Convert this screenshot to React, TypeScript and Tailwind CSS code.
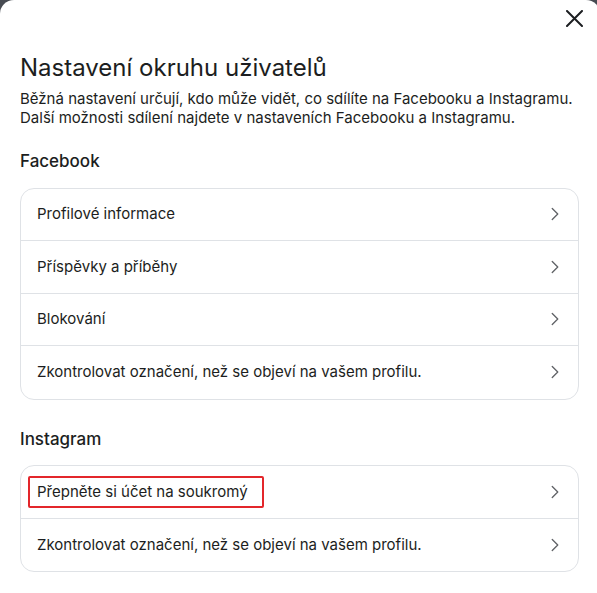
import { ChevronRight } from 'lucide-react'

const facebookRows = [
  'Profilové informace',
  'Příspěvky a příběhy',
  'Blokování',
  'Zkontrolovat označení, než se objeví na vašem profilu.',
]

const instagramRows = [
  'Přepněte si účet na soukromý',
  'Zkontrolovat označení, než se objeví na vašem profilu.',
]

function Row({ label, last, highlight }: { label: string; last?: boolean; highlight?: boolean }) {
  return (
    <div
      className={`flex h-[52.5px] items-center justify-between pl-[16px] pr-[12px] ${
        last ? '' : 'border-b border-[#dfe2e6]'
      }`}
    >
      <span
        className={`text-[15px] text-[#1c1e21] ${
          highlight ? '-ml-[9px] rounded-[2px] border-2 border-[#e3262b] py-[3px] pl-[7px] pr-[14px]' : ''
        }`}
      >
        {label}
      </span>
      <ChevronRight className="h-[22px] w-[22px] text-[#65676b]" strokeWidth={1.5} />
    </div>
  )
}

function Section({ title, rows, highlightIndex }: { title: string; rows: string[]; highlightIndex?: number }) {
  return (
    <div>
      <h2 className="mb-[13px] text-[17px] font-medium text-[#1c1e21]">{title}</h2>
      <div className="overflow-hidden rounded-[14px] border border-[#dfe2e6]">
        {rows.map((r, i) => (
          <Row key={i} label={r} last={i === rows.length - 1} highlight={i === highlightIndex} />
        ))}
      </div>
    </div>
  )
}

export default function App() {
  return (
    <div className="h-[593px] w-[597px] bg-[#474b52]" style={{ fontFamily: 'Inter, "Noto Sans", sans-serif' }}>
      <div className="h-full w-[600px] rounded-tl-[14px] rounded-tr-[14px] bg-white">
        <div className="flex justify-end pr-[17px] pt-[10px]">
          <svg width="17" height="17" viewBox="0 0 17 17" className="text-[#1c1e21]">
            <path d="M1 1 L16 16 M16 1 L1 16" stroke="currentColor" strokeWidth="2" strokeLinecap="round" />
          </svg>
        </div>
        <div className="pl-[20px] pr-[21px]">
          <h1 className="mt-[26px] text-[24px] leading-[30px] text-[#1c1e21]">Nastavení okruhu uživatelů</h1>
          <p className="mt-[6px] text-[15px] leading-[19px] text-[#1c1e21]">
            Běžná nastavení určují, kdo může vidět, co sdílíte na Facebooku a Instagramu.
            <br />
            Další možnosti sdílení najdete v nastaveních Facebooku a Instagramu.
          </p>
          <div className="mt-[22px] flex flex-col gap-[27px]">
            <Section title="Facebook" rows={facebookRows} />
            <Section title="Instagram" rows={instagramRows} highlightIndex={0} />
          </div>
        </div>
      </div>
    </div>
  )
}
